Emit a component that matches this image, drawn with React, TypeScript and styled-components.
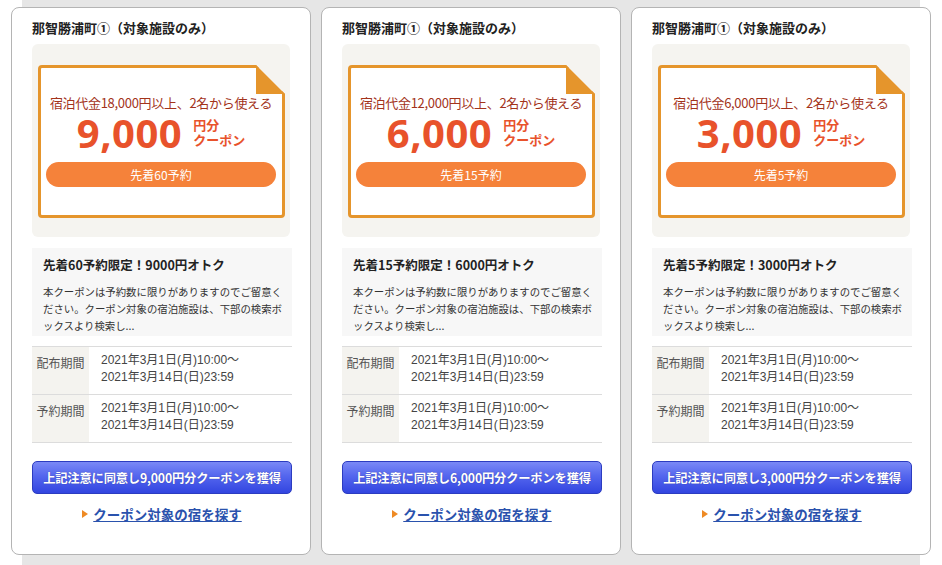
import React from 'react';
import styled, { createGlobalStyle } from 'styled-components';

const GlobalStyle = createGlobalStyle`
    html, body {
        margin: 0;
        padding: 0;
        background: #ffffff;
    }
    body {
        font-family: "Noto Sans CJK JP", "Noto Sans", sans-serif;
        color: #333;
    }
`;

// gray band behind the cards
const Page = styled.div`
    margin: 0 22px;
    height: 565px;
    background: #e6e6e6;
    overflow: visible;
`;

const Row = styled.div`
    display: flex;
    gap: 10px;
    margin: 0 -11px;
    padding-top: 7px;
`;

const Card = styled.div`
    box-sizing: border-box;
    width: 300px;
    height: 548px;
    background: #fff;
    border: 1px solid #b4b4b4;
    border-radius: 8px;
    padding: 11px 18px 0 20px;
`;

const Title = styled.h2`
    margin: 0;
    font-size: 13px;
    line-height: 18px;
    font-weight: bold;
    color: #222;
`;

const CouponArea = styled.div`
    margin: 7px 2px 0 0;
    background: #f5f4f0;
    border-radius: 6px;
    padding: 21px 5px 19px 6px;
`;

const Ticket = styled.div`
    position: relative;
    box-sizing: border-box;
    height: 153px;
    background: #fff;
    border: 3px solid #e5952c;
    border-radius: 4px;
    padding: 26px 6px 0 5px;
    text-align: center;
`;

const Corner = styled.svg`
    position: absolute;
    top: -3px;
    right: -3px;
    width: 29px;
    height: 29px;
`;

const Condition = styled.div`
    font-size: 13px;
    line-height: 18px;
    color: #a3331b;
    letter-spacing: -0.3px;
    white-space: nowrap;
`;

const AmountRow = styled.div`
    display: flex;
    align-items: center;
    justify-content: center;
    gap: 11px;
    height: 42px;
    color: #e8522b;
`;

const Amount = styled.span`
    font-family: "Open Sans", "Noto Sans", sans-serif;
    font-size: 40px;
    font-weight: bold;
    line-height: 40px;
    letter-spacing: 0.5px;
`;

const Unit = styled.span`
    display: flex;
    flex-direction: column;
    align-items: flex-start;
    font-size: 13px;
    font-weight: bold;
    line-height: 15px;
    margin-top: -2px;
`;

const Pill = styled.div`
    margin-top: 8px;
    height: 25px;
    line-height: 25px;
    border-radius: 13px;
    background: #f5823a;
    color: #fff;
    font-size: 12px;
`;

const InfoBox = styled.div`
    margin-top: 11px;
    background: #f7f7f7;
    padding: 8px 11px 2px;
`;

const InfoTitle = styled.div`
    font-size: 12.5px;
    font-weight: bold;
    line-height: 17px;
    color: #222;
`;

const InfoText = styled.p`
    margin: 10px 0 0;
    font-size: 10.4px;
    line-height: 17px;
    color: #333;
    white-space: nowrap;
`;

const Periods = styled.div`
    margin-top: 10px;
    border-top: 1px solid #dcdcdc;
`;

const PeriodRow = styled.div`
    display: flex;
    height: 47px;
    border-bottom: 1px solid #dcdcdc;
`;

const PeriodLabel = styled.div`
    width: 57px;
    background: #f4f3ef;
    font-size: 12px;
    color: #555;
    text-align: center;
    padding-top: 7px;
    line-height: 17px;
`;

const PeriodValue = styled.div`
    padding: 5px 0 0 12px;
    font-family: "Liberation Sans", "Noto Sans CJK JP", sans-serif;
    font-size: 12px;
    line-height: 17px;
    color: #444;
`;

const GetButton = styled.button`
    display: block;
    box-sizing: border-box;
    width: 100%;
    height: 33px;
    margin-top: 18px;
    border: 1px solid #2c3cc0;
    border-radius: 5px;
    background: linear-gradient(to bottom, #7a89f6 0%, #5466ee 45%, #3245e0 100%);
    color: #fff;
    font-family: "Noto Sans CJK JP", sans-serif;
    font-size: 12.3px;
    font-weight: bold;
    letter-spacing: -0.2px;
    text-shadow: 0 0 1px rgba(0, 0, 40, 0.4);
    cursor: pointer;
`;

const LinkRow = styled.div`
    margin-top: 11px;
    display: flex;
    align-items: center;
    justify-content: center;
    gap: 5px;
`;

const Marker = styled.span`
    width: 0;
    height: 0;
    border-top: 4px solid transparent;
    border-bottom: 4px solid transparent;
    border-left: 6px solid #ee8a24;
`;

const SearchLink = styled.a`
    font-size: 13.5px;
    font-weight: bold;
    line-height: 18px;
    color: #2a52ad;
    text-decoration: underline;
`;

type Coupon = {
    minPrice: string;
    amount: string;
    limit: number;
    plain: string;
};

const coupons: Coupon[] = [
    { minPrice: '18,000', amount: '9,000', limit: 60, plain: '9000' },
    { minPrice: '12,000', amount: '6,000', limit: 15, plain: '6000' },
    { minPrice: '6,000', amount: '3,000', limit: 5, plain: '3000' },
];

const CouponCard = ({ coupon }: { coupon: Coupon }) => (
    <Card>
        <Title>那智勝浦町①（対象施設のみ）</Title>
        <CouponArea>
            <Ticket>
                <Corner viewBox="0 0 29 29">
                    <polygon points="0,0 29,0 29,29" fill="#f5f4f0" />
                    <polygon points="0,0 0,29 29,29" fill="#e5952c" />
                </Corner>
                <Condition>宿泊代金{coupon.minPrice}円以上、2名から使える</Condition>
                <AmountRow>
                    <Amount>{coupon.amount}</Amount>
                    <Unit>
                        <span>円分</span>
                        <span>クーポン</span>
                    </Unit>
                </AmountRow>
                <Pill>先着{coupon.limit}予約</Pill>
            </Ticket>
        </CouponArea>

        <InfoBox>
            <InfoTitle>先着{coupon.limit}予約限定！{coupon.plain}円オトク</InfoTitle>
            <InfoText>
                本クーポンは予約数に限りがありますのでご留意く
                <br />
                ださい。クーポン対象の宿泊施設は、下部の検索ボ
                <br />
                ックスより検索し...
            </InfoText>
        </InfoBox>

        <Periods>
            <PeriodRow>
                <PeriodLabel>配布期間</PeriodLabel>
                <PeriodValue>
                    2021年3月1日(月)10:00～
                    <br />
                    2021年3月14日(日)23:59
                </PeriodValue>
            </PeriodRow>
            <PeriodRow>
                <PeriodLabel>予約期間</PeriodLabel>
                <PeriodValue>
                    2021年3月1日(月)10:00～
                    <br />
                    2021年3月14日(日)23:59
                </PeriodValue>
            </PeriodRow>
        </Periods>

        <GetButton>上記注意に同意し{coupon.amount}円分クーポンを獲得</GetButton>
        <LinkRow>
            <Marker />
            <SearchLink href="#">クーポン対象の宿を探す</SearchLink>
        </LinkRow>
    </Card>
);

const App = () => (
    <>
        <GlobalStyle />
        <Page>
            <Row>
                {coupons.map((c) => (
                    <CouponCard key={c.amount} coupon={c} />
                ))}
            </Row>
        </Page>
    </>
);

export default App;
